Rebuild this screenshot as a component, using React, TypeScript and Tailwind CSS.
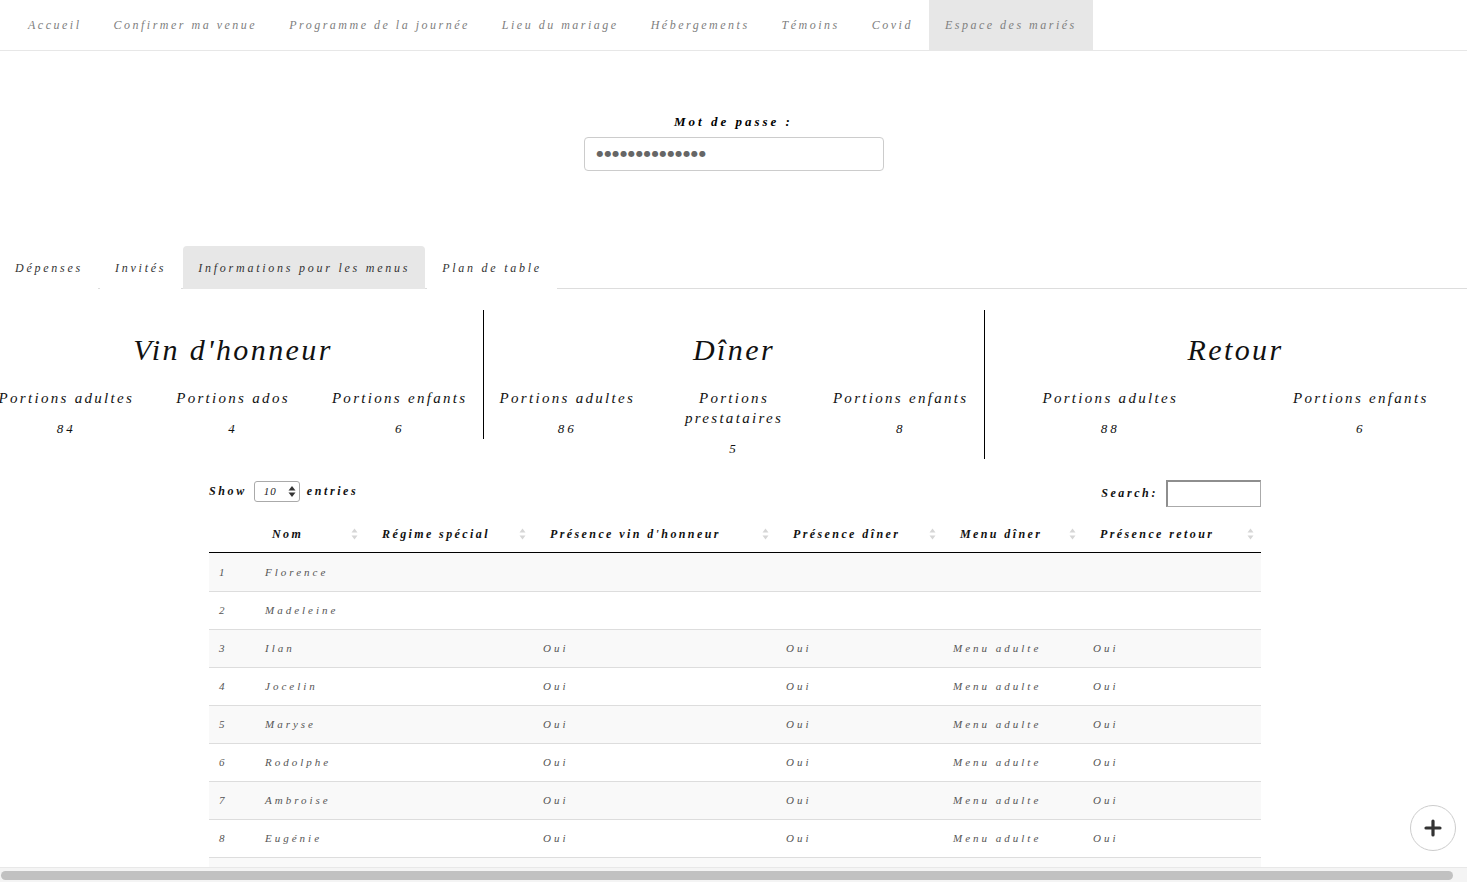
import React from "react";

const navItems = [
  "Accueil",
  "Confirmer ma venue",
  "Programme de la journée",
  "Lieu du mariage",
  "Hébergements",
  "Témoins",
  "Covid",
  "Espace des mariés",
];

const tabs = ["Dépenses", "Invités", "Informations pour les menus", "Plan de table"];

type Row = [string, string, string, string, string, string, string];

const rows: Row[] = [
  ["1", "Florence", "", "", "", "", ""],
  ["2", "Madeleine", "", "", "", "", ""],
  ["3", "Ilan", "", "Oui", "Oui", "Menu adulte", "Oui"],
  ["4", "Jocelin", "", "Oui", "Oui", "Menu adulte", "Oui"],
  ["5", "Maryse", "", "Oui", "Oui", "Menu adulte", "Oui"],
  ["6", "Rodolphe", "", "Oui", "Oui", "Menu adulte", "Oui"],
  ["7", "Ambroise", "", "Oui", "Oui", "Menu adulte", "Oui"],
  ["8", "Eugénie", "", "Oui", "Oui", "Menu adulte", "Oui"],
  ["9", "Gaspard", "", "Oui", "Oui", "Menu adulte", "Oui"],
  ["10", "Louise", "", "Oui", "Oui", "Menu adulte", "Oui"],
];

const headers = ["", "Nom", "Régime spécial", "Présence vin d'honneur", "Présence dîner", "Menu dîner", "Présence retour"];

function SortIcon() {
  return (
    <svg width="7" height="12" viewBox="0 0 7 12" className="shrink-0">
      <path d="M3.5 0.5 L6.5 4.5 L0.5 4.5 Z" fill="#d6d6d6" />
      <path d="M3.5 11.5 L6.5 7.5 L0.5 7.5 Z" fill="#d6d6d6" />
    </svg>
  );
}

function Stat({ label, value }: { label: React.ReactNode; value: string }) {
  return (
    <div className="flex-1 flex flex-col items-center text-center">
      <div className="text-[15px] leading-[20px] tracking-[2.3px] text-[#111]">{label}</div>
      <div className="mt-[11px] text-[13px] leading-[20px] tracking-[3px] text-[#111]">{value}</div>
    </div>
  );
}

function Section({
  title,
  stats,
  border,
}: {
  title: string;
  stats: { label: React.ReactNode; value: string }[];
  border?: boolean;
}) {
  return (
    <div className={"w-[501px] shrink-0 self-start " + (border ? "border-r border-black" : "")}>
      <div className="mt-[20px] text-center text-[30px] leading-[40px] tracking-[2.4px] text-[#111]">{title}</div>
      <div className="mt-[18px] flex">
        {stats.map((s, i) => (
          <Stat key={i} label={s.label} value={s.value} />
        ))}
      </div>
    </div>
  );
}

export default function App() {
  const cols = "grid grid-cols-[46px_110px_168px_243px_167px_140px_178px]";
  return (
    <div className="relative min-h-screen w-full overflow-hidden bg-white italic [font-family:'Liberation_Serif',serif]">
      {/* Top navigation */}
      <nav className="flex h-[51px] border-b border-[#e7e7e7] pl-[12px]">
        {navItems.map((n, i) => (
          <div
            key={n}
            className={
              "flex h-[50px] items-center px-[16px] text-[12px] tracking-[2.5px] text-[#808080] " +
              (i === navItems.length - 1 ? "bg-[#e7e7e7] text-[#666]" : "")
            }
          >
            {n}
          </div>
        ))}
      </nav>

      {/* Password */}
      <div className="mt-[62px] flex flex-col items-center">
        <div className="text-[13px] font-bold leading-[18px] tracking-[3px] text-black">Mot de passe :</div>
        <div className="mt-[6px] flex h-[34px] w-[300px] items-center rounded-[4px] border border-[#cccccc] pl-[12px] not-italic [font-family:'DejaVu_Sans',sans-serif] text-[8px] tracking-[0.9px] text-[#666]">
          ●●●●●●●●●●●●●●
        </div>
      </div>

      {/* Tabs */}
      <div className="mt-[75px] flex h-[43px] border-b border-[#dddddd]">
        {tabs.map((t, i) => (
          <div
            key={t}
            className={
              "-mb-px mr-[2px] flex h-[43px] items-center rounded-t-[4px] px-[15px] text-[12px] tracking-[2.75px] text-[#333] " +
              (i === 2 ? "bg-[#e7e7e7] pt-[1px]" : "bg-white")
            }
          >
            {t}
          </div>
        ))}
      </div>

      {/* Summary columns */}
      <div className="mt-[21px] ml-[-17px] flex w-[1503px]">
        <Section
          title="Vin d'honneur"
          border
          stats={[
            { label: "Portions adultes", value: "84" },
            { label: "Portions ados", value: "4" },
            { label: "Portions enfants", value: "6" },
          ]}
        />
        <Section
          title="Dîner"
          border
          stats={[
            { label: "Portions adultes", value: "86" },
            {
              label: (
                <>
                  Portions
                  <br />
                  prestataires
                </>
              ),
              value: "5",
            },
            { label: "Portions enfants", value: "8" },
          ]}
        />
        <Section
          title="Retour"
          stats={[
            { label: "Portions adultes", value: "88" },
            { label: "Portions enfants", value: "6" },
          ]}
        />
      </div>

      {/* Data table */}
      <div className="ml-[209px] mt-[18px] w-[1052px]">
        <div className="flex h-[28px] items-center justify-between">
          <div className="flex items-center text-[12px] font-bold tracking-[2.6px] text-[#111]">
            <span>Show</span>
            <div className="mx-[7px] flex h-[21px] w-[46px] items-center justify-between rounded-[3px] border border-[#aaaaaa] pl-[9px] pr-[3px] font-normal">
              <span className="text-[11px] tracking-[1px] text-[#222]">10</span>
              <svg width="8" height="13" viewBox="0 0 8 13">
                <path d="M4 1 L7.5 5.5 L0.5 5.5 Z" fill="#333" />
                <path d="M4 12 L7.5 7.5 L0.5 7.5 Z" fill="#333" />
              </svg>
            </div>
            <span>entries</span>
          </div>
          <div className="flex items-center pt-[4px] text-[12px] font-bold tracking-[2.6px] text-[#111]">
            <span>Search:</span>
            <div className="ml-[8px] h-[27px] w-[95px] border border-[#aaaaaa] border-t-[#8e8e8e] border-l-[#8e8e8e] border-t-2 border-l-2" />
          </div>
        </div>

        <div className={cols + " mt-[10px] h-[38px] border-b border-black"}>
          {headers.map((h, i) => (
            <div
              key={i}
              className="flex items-center justify-between pl-[17px] pr-[7px] text-[12px] font-bold tracking-[2.4px] text-[#111]"
            >
              <span>{h}</span>
              {i > 0 ? <SortIcon /> : null}
            </div>
          ))}
        </div>

        {rows.map((r, ri) => (
          <div
            key={ri}
            className={cols + " h-[38px] " + (ri > 0 ? "border-t border-[#dddddd] " : "") + (ri % 2 === 0 ? "bg-[#f9f9f9]" : "bg-white")}
          >
            {r.map((c, ci) => (
              <div key={ci} className="flex items-center pl-[10px] text-[11px] tracking-[3px] text-[#555]">
                {c}
              </div>
            ))}
          </div>
        ))}
      </div>

      {/* Floating plus button */}
      <div className="fixed bottom-[31px] right-[11px] flex h-[46px] w-[46px] items-center justify-center rounded-full border border-[#cccccc] bg-white">
        <svg width="18" height="18" viewBox="0 0 18 18">
          <path d="M9 2 V16 M2 9 H16" stroke="#333" strokeWidth="3.2" strokeLinecap="round" />
        </svg>
      </div>

      {/* Horizontal scrollbar */}
      <div className="fixed bottom-0 left-0 right-0 h-[15px] border-t border-[#e8e8e8] bg-[#f4f4f4]">
        <div className="ml-[1px] mt-[3px] h-[9px] w-[1452px] rounded-full bg-[#c1c1c1]" />
      </div>
    </div>
  );
}
